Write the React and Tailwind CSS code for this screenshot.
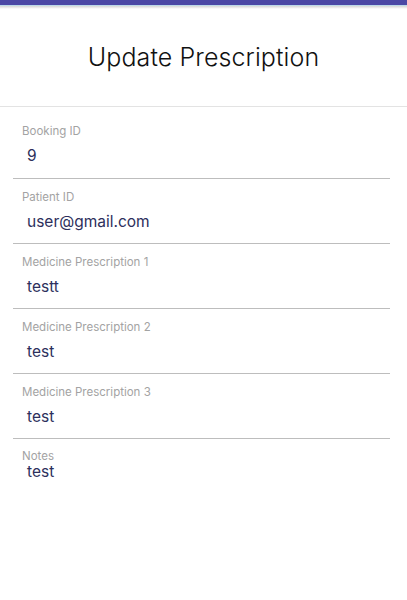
import React from 'react';

const fields = [
  { label: 'Booking ID', value: '9' },
  { label: 'Patient ID', value: 'user@gmail.com' },
  { label: 'Medicine Prescription 1', value: 'testt' },
  { label: 'Medicine Prescription 2', value: 'test' },
  { label: 'Medicine Prescription 3', value: 'test' },
];

function Field({ label, value, first }) {
  return (
    <div className={`border-b border-[#bdbdbd] ${first ? 'h-[72px] pt-[17px]' : 'h-[65px] pt-[11px]'}`}>
      <div className="pl-[9px] text-[11.5px] leading-[14px] text-[#a3a3a3]">{label}</div>
      <div className="pl-[14px] mt-[8px] text-[15.5px] leading-[20px] text-[#2d2f5c]">{value}</div>
    </div>
  );
}

export default function App() {
  return (
    <div className="min-h-[600px] w-full bg-white font-['Inter','Liberation_Sans',sans-serif]">
      {/* top bar */}
      <div className="h-[5px] bg-[#4b48a5]" />
      <div className="h-px bg-[#bcd9e8]" />
      <div className="h-[3px] bg-gradient-to-b from-[#d6d6d6] to-white" />

      <div className="h-[98px] flex items-center justify-center border-b border-[#e3e3e3]">
        <h1 className="text-[25px] font-light text-[#111] tracking-[0.1px]">Update Prescription</h1>
      </div>

      <div className="pl-[13px] w-[390px]">
        {fields.map((f, i) => (
          <Field key={f.label} label={f.label} value={f.value} first={i === 0} />
        ))}
        <div className="pt-[10px]">
          <div className="pl-[9px] text-[11.5px] leading-[14px] text-[#a3a3a3]">Notes</div>
          <div className="pl-[14px] -mt-[1px] text-[15.5px] leading-[20px] text-[#2d2f5c]">test</div>
        </div>
      </div>
    </div>
  );
}
